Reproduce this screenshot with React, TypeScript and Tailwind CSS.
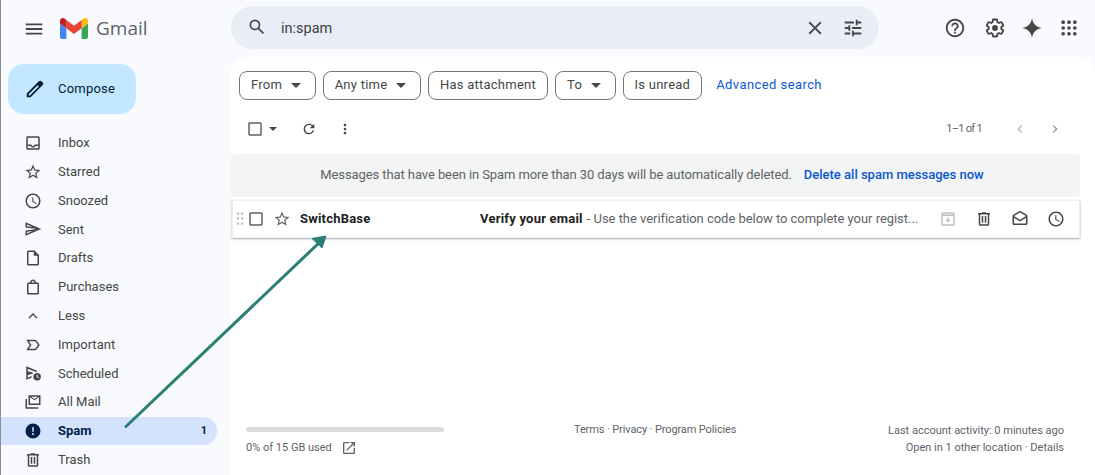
import React from "react";

const PATHS: Record<string, string> = {
  menu: "M3 18h18v-2H3v2zm0-5h18v-2H3v2zm0-7v2h18V6H3z",
  pen: "M20.41 4.94l-1.35-1.35c-.78-.78-2.05-.78-2.83 0L3 16.82V21h4.18L20.41 7.77c.79-.78.79-2.05 0-2.83zm-14 14.12L5 19v-1.36l9.82-9.82 1.41 1.41-9.82 9.83z",
  inbox: "M19 3H5c-1.1 0-2 .9-2 2v14c0 1.1.9 2 2 2h14c1.1 0 2-.9 2-2V5c0-1.1-.9-2-2-2zm0 16H5v-3h3.56c.69 1.19 1.97 2 3.45 2s2.75-.81 3.45-2H19v3zm0-5h-4.99c0 1.1-.9 2-2 2s-2-.9-2-2H5V5h14v9z",
  star: "M22 9.24l-7.19-.62L12 2 9.19 8.63 2 9.24l5.46 4.73L5.82 21 12 17.27 18.18 21l-1.63-7.03L22 9.24zM12 15.4l-3.76 2.27 1-4.28-3.32-2.88 4.38-.38L12 6.1l1.71 4.04 4.38.38-3.32 2.88 1 4.28L12 15.4z",
  clock: "M11.99 2C6.47 2 2 6.48 2 12s4.47 10 9.99 10C17.52 22 22 17.52 22 12S17.52 2 11.99 2zM12 20c-4.42 0-8-3.58-8-8s3.58-8 8-8 8 3.58 8 8-3.58 8-8 8zm.5-13H11v6l5.25 3.15.75-1.23-4.5-2.67z",
  send: "M4.01 6.03l7.51 3.22-7.52-1 .01-2.22m7.5 8.72L4 17.97v-2.22l7.51-1M2.01 3L2 10l15 2-15 2 .01 7L23 12 2.01 3z",
  draft: "M14 2H6c-1.1 0-1.99.9-1.99 2L4 20c0 1.1.89 2 1.99 2H18c1.1 0 2-.9 2-2V8l-6-6zM6 20V4h7v5h5v11H6z",
  bag: "M18 6h-2c0-2.21-1.79-4-4-4S8 3.79 8 6H6c-1.1 0-2 .9-2 2v12c0 1.1.9 2 2 2h12c1.1 0 2-.9 2-2V8c0-1.1-.9-2-2-2zm-6-2c1.1 0 2 .9 2 2h-4c0-1.1.9-2 2-2zm6 16H6V8h12v12z",
  less: "M12 8l-6 6 1.41 1.41L12 10.83l4.59 4.58L18 14z",
  important: "M15 19H3l4.5-7L3 5h12c.65 0 1.26.31 1.63.84L21 12l-4.37 6.16c-.37.52-.98.84-1.63.84zm-8.5-2H15l3.5-5L15 7H6.5l3.5 5-3.5 5z",
  scheduled: "M3 3l15 6.4-2 1.4L5 6.2v3.6l7 1.7v1.4l-7 1.7v3.6l5-2.1v2.2L3 21V3zM17.5 12a5 5 0 1 1 0 10 5 5 0 0 1 0-10zm-.6 2v3.4l2.6 1.5.6-1-2-1.2V14h-1.2z",
  allmail: "M6 3h16v13H6V3zm2 2.6V14h12V5.6l-6 4-6-4zM9.4 5l4.6 3 4.6-3H9.4zM2 8h2v11h15v2H2V8z",
  spam: "M12 2a10 10 0 1 0 0 20 10 10 0 0 0 0-20zm0 15.3c-.72 0-1.3-.58-1.3-1.3s.58-1.3 1.3-1.3 1.3.58 1.3 1.3-.58 1.3-1.3 1.3zm1-4.3h-2V6.5h2V13z",
  trash: "M15 4V3H9v1H4v2h1v13c0 1.1.9 2 2 2h10c1.1 0 2-.9 2-2V6h1V4h-5zm2 15H7V6h10v13zM9 8h2v9H9zm4 0h2v9h-2z",
  search: "M20.49 19l-5.73-5.73C15.53 12.2 16 10.91 16 9.5A6.5 6.5 0 1 0 9.5 16c1.41 0 2.7-.47 3.77-1.24L19 20.49 20.49 19zM5 9.5C5 7.01 7.01 5 9.5 5S14 7.01 14 9.5 11.99 14 9.5 14 5 11.99 5 9.5z",
  close: "M19 6.41L17.59 5 12 10.59 6.41 5 5 6.41 10.59 12 5 17.59 6.41 19 12 13.41 17.59 19 19 17.59 13.41 12z",
  tune: "M3 17v2h6v-2H3zM3 5v2h10V5H3zm10 16v-2h8v-2h-8v-2h-2v6h2zM7 9v2H3v2h4v2h2V9H7zm14 4v-2H11v2h10zm-6-4h2V7h4V5h-4V3h-2v6z",
  help: "M11 18h2v-2h-2v2zm1-16C6.48 2 2 6.48 2 12s4.48 10 10 10 10-4.48 10-10S17.52 2 12 2zm0 18c-4.41 0-8-3.59-8-8s3.59-8 8-8 8 3.59 8 8-3.59 8-8 8zm0-14c-2.21 0-4 1.79-4 4h2c0-1.1.9-2 2-2s2 .9 2 2c0 2-3 1.75-3 5h2c0-2.25 3-2.5 3-5 0-2.21-1.79-4-4-4z",
  gear: "M13.85 22.25h-3.7c-.74 0-1.36-.54-1.45-1.27l-.27-1.89c-.27-.14-.53-.29-.79-.46l-1.8.72c-.7.26-1.47-.03-1.81-.65L2.2 15.53c-.35-.66-.2-1.44.36-1.88l1.53-1.19c-.01-.15-.02-.3-.02-.46 0-.15.01-.31.02-.46l-1.52-1.19c-.59-.45-.74-1.26-.37-1.88l1.85-3.19c.34-.62 1.11-.9 1.79-.63l1.81.73c.26-.17.52-.32.78-.46l.27-1.91c.09-.7.71-1.25 1.44-1.25h3.7c.74 0 1.36.54 1.45 1.27l.27 1.89c.27.14.53.29.79.46l1.8-.72c.71-.26 1.48.03 1.82.65l1.84 3.18c.36.66.2 1.44-.36 1.88l-1.52 1.19c.01.15.02.3.02.46s-.01.31-.02.46l1.52 1.19c.56.45.72 1.23.37 1.86l-1.86 3.22c-.34.62-1.11.9-1.8.63l-1.8-.72c-.26.17-.52.32-.78.46l-.27 1.91c-.1.68-.72 1.22-1.46 1.22zm-3.23-2h2.76l.37-2.55.53-.22c.44-.18.88-.44 1.34-.78l.45-.34 2.38.96 1.38-2.4-2.03-1.58.07-.56c.03-.26.06-.51.06-.78s-.03-.53-.06-.78l-.07-.56 2.03-1.58-1.39-2.4-2.39.96-.45-.35c-.42-.32-.87-.58-1.33-.77l-.52-.22-.37-2.55h-2.76l-.37 2.55-.53.21c-.44.19-.88.44-1.34.79l-.45.33-2.38-.95-1.39 2.39 2.03 1.58-.07.56a7 7 0 0 0-.06.79c0 .26.02.53.06.78l.07.56-2.03 1.58 1.38 2.4 2.39-.96.45.35c.43.33.86.58 1.33.77l.53.22.38 2.55zM12 8.8a3.2 3.2 0 1 1 0 6.4 3.2 3.2 0 0 1 0-6.4z",
  sparkle: "M12 1C12.7 7.2 16.8 11.3 23 12 16.8 12.7 12.7 16.8 12 23 11.3 16.8 7.2 12.7 1 12 7.2 11.3 11.3 7.2 12 1Z",
  refresh: "M17.65 6.35C16.2 4.9 14.21 4 12 4c-4.42 0-7.99 3.58-7.99 8s3.57 8 7.99 8c3.73 0 6.84-2.55 7.73-6h-2.08c-.82 2.33-3.04 4-5.65 4-3.31 0-6-2.69-6-6s2.69-6 6-6c1.66 0 3.14.69 4.22 1.78L13 11h7V4l-2.35 2.35z",
  more: "M12 8c1.1 0 2-.9 2-2s-.9-2-2-2-2 .9-2 2 .9 2 2 2zm0 2c-1.1 0-2 .9-2 2s.9 2 2 2 2-.9 2-2-.9-2-2-2zm0 6c-1.1 0-2 .9-2 2s.9 2 2 2 2-.9 2-2-.9-2-2-2z",
  left: "M15.41 7.41L14 6l-6 6 6 6 1.41-1.41L10.83 12z",
  right: "M8.59 16.59L10 18l6-6-6-6-1.41 1.41L13.17 12z",
  box: "M19 5v14H5V5h14m0-2H5c-1.1 0-2 .9-2 2v14c0 1.1.9 2 2 2h14c1.1 0 2-.9 2-2V5c0-1.1-.9-2-2-2z",
  moveinbox: "M19 3H5c-1.1 0-2 .9-2 2v14c0 1.1.9 2 2 2h14c1.1 0 2-.9 2-2V5c0-1.1-.9-2-2-2zm0 16H5V8h14v11zM5 5h14v1H5V5zm8 5v3h2.5L12 16.5 8.5 13H11v-3h2z",
  openmail: "M21.99 8c0-.72-.37-1.35-.94-1.7L12 1 2.95 6.3C2.38 6.65 2 7.28 2 8v10c0 1.1.9 2 2 2h16c1.1 0 2-.9 2-2l-.01-10zm-2 0v.01L12 13 4 8l8-4.68L19.99 8zM4 18v-7.66l8 5.02 7.99-4.99L20 18H4z",
  external: "M19 19H5V5h7V3H5a2 2 0 0 0-2 2v14c0 1.1.89 2 2 2h14c1.1 0 2-.9 2-2v-7h-2v7zM14 3v2h3.59l-9.83 9.83 1.41 1.41L19 6.41V10h2V3h-7z",
  drag: "M8 4h3v3H8zM13 4h3v3h-3zM8 10h3v3H8zM13 10h3v3h-3zM8 16h3v3H8zM13 16h3v3h-3z",
};

function Icon({ name, className }: { name: string; className: string }) {
  return (
    <svg viewBox="0 0 24 24" fill="currentColor" className={className}>
      <path d={PATHS[name]} fillRule="evenodd" />
    </svg>
  );
}

function AppsGrid() {
  const dots = [5, 12, 19];
  return (
    <svg viewBox="0 0 24 24" fill="currentColor" className="w-[20px] h-[20px] text-[#444746]">
      {dots.map((y) =>
        dots.map((x) => <circle key={`${x}-${y}`} cx={x} cy={y} r="2.2" />)
      )}
    </svg>
  );
}

function GmailLogo() {
  return (
    <svg viewBox="52 42 88 66" className="w-[28px] h-[21px]">
      <path fill="#4285f4" d="M58 108h14V74L52 59v43c0 3.32 2.69 6 6 6" />
      <path fill="#34a853" d="M120 108h14c3.32 0 6-2.69 6-6V59l-20 15" />
      <path fill="#fbbc04" d="M120 48v26l20-15v-8c0-7.42-8.47-11.65-14.4-7.2" />
      <path fill="#ea4335" d="M72 74V48l24 18 24-18v26L96 92" />
      <path fill="#c5221f" d="M52 51v8l20 15V48l-5.6-4.2c-5.94-4.45-14.4-.22-14.4 7.2" />
    </svg>
  );
}

const navItems = [
  { icon: "inbox", label: "Inbox" },
  { icon: "star", label: "Starred" },
  { icon: "clock", label: "Snoozed" },
  { icon: "send", label: "Sent" },
  { icon: "draft", label: "Drafts" },
  { icon: "bag", label: "Purchases" },
  { icon: "less", label: "Less" },
  { icon: "important", label: "Important" },
  { icon: "scheduled", label: "Scheduled" },
  { icon: "allmail", label: "All Mail" },
  { icon: "spam", label: "Spam", active: true, count: "1" },
  { icon: "trash", label: "Trash" },
];

function Chip({ label, caret }: { label: string; caret?: boolean }) {
  return (
    <div className={`h-[29px] flex items-center gap-[9px] pl-[11px] border border-[#747775] rounded-[8px] text-[13px] tracking-[0.25px] text-[#444746] ${caret ? "pr-[13.5px]" : "pr-[11px]"}`}>
      <span className="-mt-[2px]">{label}</span>
      {caret && <span className="w-0 h-0 border-x-[5px] border-x-transparent border-t-[5px] border-t-[#444746]" />}
    </div>
  );
}

export default function App() {
  return (
    <div
      className="relative flex w-[1095px] h-[475px] overflow-hidden bg-[#f8fafd] border-l border-[#8a8f8e]"
      style={{ fontFamily: "Roboto, sans-serif" }}
    >
      {/* sidebar */}
      <aside className="w-[230px] shrink-0 flex flex-col">
        <div className="h-[57px] flex items-center pl-[22px]">
          <Icon name="menu" className="w-[22px] h-[22px] text-[#444746]" />
          <div className="ml-[15px]"><GmailLogo /></div>
          <span className="ml-[8px] text-[19px] text-[#5f6368] leading-none" style={{ fontFamily: "'Open Sans', sans-serif" }}>Gmail</span>
        </div>
        <div className="ml-[7px] mt-[7px] w-[128px] h-[50px] rounded-[16px] bg-[#c2e7ff] flex items-center pl-[16px] gap-[12px] text-[#001d35] text-[13px] tracking-[0.2px]">
          <Icon name="pen" className="w-[22px] h-[22px]" />
          <span>Compose</span>
        </div>
        <nav className="mt-[14.6px] flex flex-col">
          {navItems.map((item) => (
            <div
              key={item.label}
              className={`h-[28.8px] w-[216px] flex items-center pl-[23px] pr-[10px] rounded-r-full text-[13px] ${item.active ? "bg-[#d3e3fd] text-[#041e49] font-bold" : "text-[#444746]"}`}
            >
              <Icon name={item.icon} className={`w-[18px] h-[18px] ${item.active ? "text-[#041e49]" : "text-[#444746]"}`} />
              <span className="ml-[16px] flex-1">{item.label}</span>
              {item.count && <span className="text-[11px]">{item.count}</span>}
            </div>
          ))}
        </nav>
      </aside>

      {/* right column */}
      <div className="flex-1 flex flex-col min-w-0">
        <div className="h-[57px] shrink-0 flex items-center">
          <div className="w-[648px] h-[43px] -mt-[3px] rounded-full bg-[#e9eef6] flex items-center pl-[16px] pr-[15px] text-[#1f1f1f]">
            <Icon name="search" className="w-[20px] h-[20px] text-[#444746]" />
            <span className="ml-[14px] pt-[3px] flex-1 text-[14.5px] text-[#3c4043]">in:spam</span>
            <Icon name="close" className="w-[22px] h-[22px] mt-[1px] text-[#444746]" />
            <Icon name="tune" className="ml-[16px] w-[22px] h-[22px] mt-[1px] text-[#444746]" />
          </div>
          <div className="ml-[65px] -mt-[2px] flex items-center">
            <Icon name="help" className="w-[22px] h-[22px] text-[#444746]" />
            <Icon name="gear" className="ml-[18px] w-[22px] h-[22px] text-[#444746]" />
            <Icon name="sparkle" className="ml-[15px] w-[22px] h-[22px] text-[#444746]" />
            <div className="ml-[16px]"><AppsGrid /></div>
          </div>
        </div>

        <main className="flex-1 min-h-0 bg-white rounded-t-[16px] flex flex-col">
          <div className="flex items-center gap-[7px] pl-[8px] pt-[14px]">
            <Chip label="From" caret />
            <Chip label="Any time" caret />
            <Chip label="Has attachment" />
            <Chip label="To" caret />
            <Chip label="Is unread" />
            <span className="ml-[7px] -mt-[2px] text-[13px] tracking-[0.42px] text-[#0b57d0]">Advanced search</span>
          </div>

          <div className="h-[40px] mt-[9px] flex items-center pl-[15px] pr-[32px]">
            <Icon name="box" className="w-[18px] h-[18px] text-[#5f6368]" />
            <span className="ml-[5px] w-0 h-0 border-x-[4px] border-x-transparent border-t-[4px] border-t-[#444746]" />
            <Icon name="refresh" className="ml-[24px] w-[16px] h-[16px] text-[#444746]" />
            <Icon name="more" className="ml-[20px] w-[16px] h-[16px] text-[#444746]" />
            <span className="ml-auto text-[11px] tracking-[-0.7px] text-[#5f6368]">1–1 of 1</span>
            <Icon name="left" className="ml-[30px] w-[16px] h-[16px] text-[#b4b7b9]" />
            <Icon name="right" className="ml-[19px] w-[16px] h-[16px] text-[#9b9ea0]" />
          </div>

          <div className="mt-[5px] w-[849px] h-[43px] pb-[2px] pr-[7px] rounded-[4px] bg-[#f2f5f3] flex items-center justify-center gap-[12px] text-[13px]">
            <span className="text-[#5f6368] tracking-[-0.09px]">Messages that have been in Spam more than 30 days will be automatically deleted.</span>
            <span className="font-medium text-[#0b57d0]">Delete all spam messages now</span>
          </div>

          <div className="mt-[3px] ml-[1px] w-[848px] h-[38px] flex items-center bg-white border border-[#eceeef] shadow-[0_1px_2px_rgba(60,64,67,0.45)] text-[13px]">
            <Icon name="drag" className="-ml-[3px] w-[20px] h-[20px] text-[#c3c5c7]" />
            <Icon name="box" className="-ml-[3px] w-[18px] h-[18px] text-[#5f6368]" />
            <Icon name="star" className="ml-[8px] w-[18px] h-[18px] text-[#5f6368]" />
            <span className="ml-[9px] w-[180px] font-bold text-[#202124] tracking-[0.2px]">SwitchBase</span>
            <span className="font-bold text-[#202124] tracking-[0.22px]">Verify your email</span>
            <span className="ml-[4px] whitespace-nowrap text-[#5f6368] tracking-[-0.04px]">- Use the verification code below to complete your regist...</span>
            <div className="ml-auto mr-[14px] flex items-center gap-[18px]">
              <Icon name="moveinbox" className="w-[18px] h-[18px] text-[#bcbec0]" />
              <Icon name="trash" className="w-[18px] h-[18px] text-[#444746]" />
              <Icon name="openmail" className="w-[18px] h-[18px] text-[#444746]" />
              <Icon name="clock" className="w-[18px] h-[18px] text-[#444746]" />
            </div>
          </div>

          <footer className="mt-auto pb-[19px] pl-[15px] pr-[31px] flex items-start text-[11px] text-[#5f6368]">
            <div className="w-[198px]">
              <div className="mt-[5px] h-[5px] rounded-full bg-[#dadce0]" />
              <div className="mt-[8px] flex items-center gap-[9px]">
                <span>0% of 15 GB used</span>
                <Icon name="external" className="w-[16px] h-[16px]" />
              </div>
            </div>
            <div className="ml-[130px] tracking-[-0.12px]">Terms · Privacy · Program Policies</div>
            <div className="ml-auto text-right leading-[17px]">
              <div>Last account activity: 0 minutes ago</div>
              <div>Open in 1 other location · Details</div>
            </div>
          </footer>
        </main>
      </div>

      {/* annotation arrow */}
      <svg viewBox="0 0 1095 475" className="absolute left-0 top-0 w-[1095px] h-[475px] pointer-events-none">
        <path d="M125 426.5L320 241" fill="none" stroke="#2a7f74" strokeWidth="3" strokeLinecap="round" />
        <path d="M311 238.5L325 236L321 248Z" fill="#2a7f74" stroke="#2a7f74" strokeWidth="1" strokeLinejoin="round" />
      </svg>
    </div>
  );
}
